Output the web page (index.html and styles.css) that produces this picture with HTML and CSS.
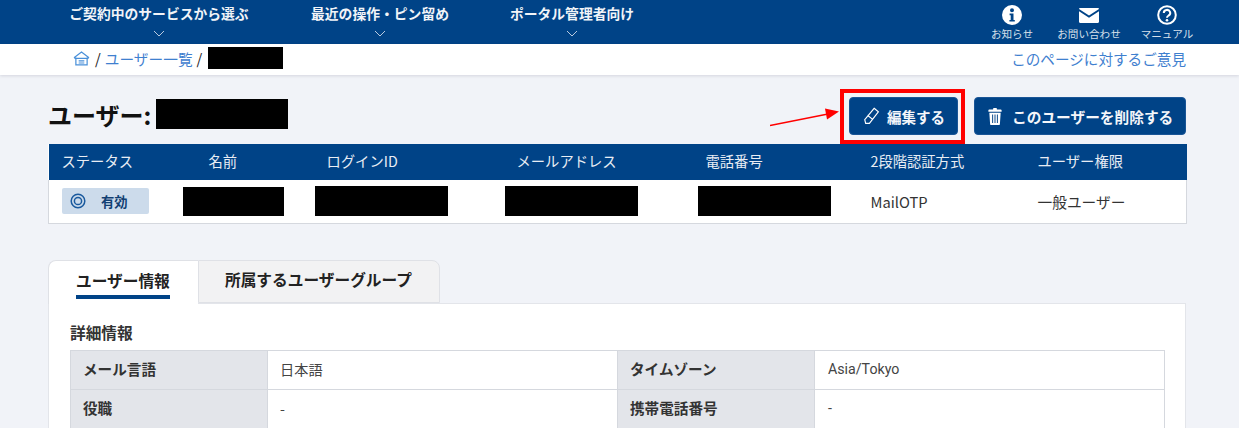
FILE: index.html
```html
<!DOCTYPE html>
<html lang="ja">
<head>
<meta charset="utf-8">
<title>ユーザー</title>
<link rel="stylesheet" href="styles.css">
</head>
<body>
<header class="nav">
  <nav class="nav-menu">
    <a class="nav-item nav-item-a">ご契約中のサービスから選ぶ<svg class="chev" viewBox="0 0 12 7"><path d="M1 1l5 5 5-5"/></svg></a>
    <a class="nav-item nav-item-b">最近の操作・ピン留め<svg class="chev" viewBox="0 0 12 7"><path d="M1 1l5 5 5-5"/></svg></a>
    <a class="nav-item nav-item-c">ポータル管理者向け<svg class="chev" viewBox="0 0 12 7"><path d="M1 1l5 5 5-5"/></svg></a>
  </nav>
  <div class="nav-tools">
    <a class="tool tool-a"><svg class="tool-icon" viewBox="0 0 20 20"><path fill="#fff" fill-rule="evenodd" d="M10 0a10 10 0 1 0 0 20 10 10 0 0 0 0-20zM10 3.200a2 2 0 1 1 0 4 2 2 0 0 1 0-4zM7.600 8.600h3.900v6.300h1.300v1.700H7.400v-1.700h1.300v-4.600H7.600z"/></svg><span>お知らせ</span></a>
    <a class="tool tool-b"><svg class="tool-icon tool-mail" viewBox="0 0 20 15"><path fill="#fff" d="M1.200 0h17.600c.7 0 1.200.5 1.200 1.100L10 7.600 0 1.100C0 .5.500 0 1.200 0zM0 3.200l10 6.500 10-6.500v10.600c0 .7-.5 1.200-1.200 1.200H1.200C.5 15 0 14.500 0 13.800z"/></svg><span>お問い合わせ</span></a>
    <a class="tool tool-c"><svg class="tool-icon" viewBox="0 0 20 20"><circle cx="10" cy="10" r="8.800" fill="none" stroke="#fff" stroke-width="2"/><path fill="none" stroke="#fff" stroke-width="2" d="M6.800 8a3.200 3 0 1 1 4.800 2.500c-1 .6-1.600 1.200-1.600 2.300"/><circle cx="10" cy="15.300" r="1.300" fill="#fff"/></svg><span>マニュアル</span></a>
  </div>
</header>
<div class="crumbs">
  <div class="crumb-list">
    <svg class="home" viewBox="0 0 18 16"><path fill="none" stroke="#4a90d9" stroke-width="1.300" d="M1 7.200L9 1.200l8 6M3 7v7.800h12V7M1.500 7.800h15M6 10.500h6M6 12.800h6"/></svg>
    <span class="sep">/</span>
    <a class="crumb-link">ユーザー一覧</a>
    <span class="sep">/</span>
    <span class="mask mask-crumb"></span>
  </div>
  <a class="feedback">このページに対するご意見</a>
</div>
<main class="main">
  <div class="title-row">
    <h1 class="title">ユーザー:</h1>
    <span class="mask mask-title"></span>
    <div class="actions">
      <div class="highlight">
        <a class="btn btn-edit"><svg class="btn-icon" viewBox="0 0 16 18"><path fill="none" stroke="#fff" stroke-width="1.100" d="M10.500 1.200l4 3.300-8.500 11H2.500L1.600 12zM4.200 7.800l5.200 4.200"/></svg>編集する</a>
      </div>
      <a class="btn btn-delete"><svg class="btn-icon btn-trash" viewBox="0 0 14 18"><path fill="#fff" fill-rule="evenodd" d="M5 .5C5 .2 5.400 0 5.800 0h2.400c.4 0 .8.200.8.500V1.500h4c.6 0 1 .4 1 1V4H0V2.500c0-.6.400-1 1-1h4zM1 5h12l-.8 12c0 .6-.5 1-1 1H2.800c-.5 0-1-.4-1-1zM4 7v9h1V7zM6.500 7v9h1V7zM9 7v9h1V7z"/></svg>このユーザーを削除する</a>
    </div>
    <svg class="arrow" viewBox="0 0 70 20"><path fill="none" stroke="#f00" stroke-width="1.500" d="M0 17.500L58 6"/><path fill="#f00" d="M69 3.500L55 .5l2 11z"/></svg>
  </div>
  <table class="summary">
    <thead>
      <tr>
        <th class="c1">ステータス</th><th class="c2">名前</th><th class="c3">ログインID</th><th class="c4">メールアドレス</th><th class="c5">電話番号</th><th class="c6">2段階認証方式</th><th class="c7">ユーザー権限</th>
      </tr>
    </thead>
    <tbody>
      <tr>
        <td class="c1"><span class="badge"><svg class="badge-icon" viewBox="0 0 16 16"><circle cx="8" cy="8" r="6.800" fill="none" stroke="#1a5a9e" stroke-width="1.500"/><circle cx="8" cy="8" r="3.600" fill="none" stroke="#1a5a9e" stroke-width="1.500"/></svg><b>有効</b></span></td>
        <td class="c2"><span class="mask mask-name"></span></td>
        <td class="c3"><span class="mask mask-cell"></span></td>
        <td class="c4"><span class="mask mask-cell"></span></td>
        <td class="c5"><span class="mask mask-cell"></span></td>
        <td class="c6">MailOTP</td>
        <td class="c7">一般ユーザー</td>
      </tr>
    </tbody>
  </table>
  <div class="tabs">
    <div class="tab tab-active"><span class="tab-label">ユーザー情報</span></div>
    <div class="tab tab-idle"><span>所属するユーザーグループ</span></div>
  </div>
  <section class="panel">
    <h2 class="panel-title">詳細情報</h2>
    <table class="detail">
      <tr><th>メール言語</th><td>日本語</td><th>タイムゾーン</th><td>Asia/Tokyo</td></tr>
      <tr><th>役職</th><td>-</td><th>携帯電話番号</th><td>-</td></tr>
    </table>
  </section>
</main>
</body>
</html>
```
FILE: styles.css
```css
* { box-sizing: border-box; }
html, body { margin: 0; height: 428px; overflow: hidden; }
body {
  background: #f1f3f8;
  color: #222;
  font-family: "Noto Sans CJK JP", "Liberation Sans", sans-serif;
  font-size: 14px;
}
.nav {
  height: 44px;
  background: #004387;
  color: #fff;
  display: flex;
  justify-content: space-between;
}
.nav-menu { display: flex; }
.nav-item {
  display: flex;
  flex-direction: column;
  align-items: center;
  font-size: 13.800px;
  font-weight: 700;
  line-height: 19px;
  padding-top: 4px;
  color: #f1f4f8;
  white-space: nowrap;
}
.nav-item-a { margin-left: 69px; width: 180px; }
.nav-item-b { margin-left: 62px; width: 138px; }
.nav-item-c { margin-left: 61px; width: 124px; }
.chev {
  width: 12px;
  height: 7px;
  margin-top: 7px;
  fill: none;
  stroke: #b9cadf;
  stroke-width: 1;
}
.nav-tools { display: flex; margin-right: 42px; }
.tool {
  display: flex;
  flex-direction: column;
  align-items: center;
  font-size: 10.600px;
  line-height: 14px;
  color: #d7e0eb;
  padding-top: 5px;
}
.tool-a { width: 60px; }
.tool-b { width: 80px; margin-left: 7px; }
.tool-c { width: 60px; margin-left: 8px; }
.tool-icon { width: 20px; height: 20px; margin-bottom: 2px; }
.tool-mail { height: 15px; margin: 3px 0 4px; }
.crumbs {
  height: 31px;
  background: #fff;
  box-shadow: 0 1px 3px rgba(0, 0, 40, .12);
  display: flex;
  justify-content: space-between;
  align-items: center;
  padding: 0 53px 3px 73px;
  font-size: 14.700px;
}
.crumb-list { display: flex; align-items: center; gap: 4px; }
.home { width: 17px; height: 15px; margin-right: 1px; }
.sep { color: #222; }
.crumb-link, .feedback { color: #3f80cf; }
.feedback { font-size: 14.600px; }
.mask { display: block; background: #000; }
.mask-crumb { width: 75px; height: 22px; margin-left: 2px; }
.main { padding: 0 53px 0 48px; }
.title-row {
  position: relative;
  height: 69px;
  display: flex;
  align-items: flex-start;
}
.title {
  margin: 24px 0 0;
  font-size: 24px;
  line-height: 32px;
  font-weight: 700;
  color: #111;
  width: 108px;
}
.mask-title { width: 132px; height: 30px; margin-top: 24px; }
.actions {
  margin-left: auto;
  display: flex;
  align-items: flex-start;
  margin-top: 14px;
}
.highlight {
  border: 4px solid #f00;
  padding: 4px 3px 5px 5px;
  margin-right: 9px;
}
.btn {
  height: 38px;
  display: flex;
  align-items: center;
  background: #004387;
  color: #f4f6fa;
  border-radius: 4px;
  font-size: 14.500px;
  font-weight: 700;
  white-space: nowrap;
  border: 1px solid #1a5596;
}
.btn-edit { width: 109px; padding-left: 13px; }
.btn-delete { width: 212px; margin-top: 8px; padding-left: 13px; font-size: 14.700px; }
.btn-icon { width: 17px; height: 19px; margin-right: 7px; }
.btn-trash { width: 14px; height: 17px; margin-right: 10px; }
.arrow {
  position: absolute;
  left: 722px;
  top: 33px;
  width: 70px;
  height: 20px;
}
.summary {
  width: 1138px;
  border-collapse: collapse;
  table-layout: fixed;
  background: #fff;
  font-size: 14.700px;
}
.summary th {
  height: 36px;
  background: #004387;
  color: #e8edf4;
  font-weight: 400;
  font-size: 14.300px;
  text-align: left;
  padding: 0 0 4px;
}
.summary td {
  height: 43px;
  padding: 0;
  border-bottom: 1px solid #d5d8de;
  color: #333;
}
.summary td:first-child { border-left: 1px solid #d5d8de; }
.summary td:last-child { border-right: 1px solid #d5d8de; }
.summary .c1 { width: 134px; padding-left: 13px; }
.summary .c2 { width: 132px; }
.summary .c3 { width: 190px; }
.summary .c4 { width: 193px; }
.summary .c5 { width: 173px; }
.summary .c6 { width: 167px; }
.summary .c7 { width: 149px; }
.summary th.c2 { padding-left: 26px; }
.summary th.c3, .summary th.c4 { padding-left: 12px; }
.summary th.c5 { padding-left: 8px; }
.badge {
  display: flex;
  align-items: center;
  width: 87px;
  height: 26px;
  background: #ccdbeb;
  border-radius: 2px;
  padding-left: 8px;
  color: #123f73;
  font-size: 13.300px;
}
.badge-icon { width: 16px; height: 16px; margin-right: 15px; }
.badge b { font-weight: 700; }
.mask-name { width: 101px; height: 29px; }
.mask-cell { width: 133px; height: 30px; }
.tabs {
  display: flex;
  height: 43px;
  margin-top: 36px;
  width: 392px;
}
.tab {
  display: flex;
  align-items: center;
  font-weight: 700;
  font-size: 15.700px;
  border-top: 1px solid #dfe1e6;
}
.tab-active {
  width: 150px;
  background: #fff;
  border-left: 1px solid #dfe1e6;
  border-radius: 8px 0 0 0;
  padding-left: 27px;
  position: relative;
  z-index: 1;
  margin-bottom: -1px;
}
.tab-label {
  display: block;
  border-bottom: 4px solid #004387;
  padding: 4px 0 3px;
  line-height: 22px;
}
.tab-idle {
  width: 242px;
  background: #f2f2f3;
  border-left: 1px solid #dfe1e6;
  border-right: 1px solid #dfe1e6;
  border-bottom: 1px solid #dfe1e6;
  border-radius: 0 8px 0 0;
  padding: 0 0 4px 26px;
}
.panel {
  width: 1138px;
  height: 140px;
  background: #fff;
  border: 1px solid #e3e5ea;
  padding: 0 21px;
}
.panel-title {
  margin: 18px 0 6px;
  font-size: 15.700px;
  line-height: 22px;
  font-weight: 700;
  color: #333;
}
.detail {
  width: 1095px;
  border-collapse: collapse;
  table-layout: fixed;
  font-size: 14.600px;
}
.detail th, .detail td {
  height: 39px;
  border: 1px solid #d5d8de;
  padding: 0 0 2px 12px;
  text-align: left;
}
.detail th {
  width: 197px;
  background: #e3e5ea;
  font-weight: 700;
  color: #333;
}
.detail td { color: #444; font-size: 14.200px; }
.detail td:nth-child(2) { width: 350px; }
.detail td:last-child { font-family: Roboto, "Noto Sans CJK JP", sans-serif; padding-left: 13px; }
```
